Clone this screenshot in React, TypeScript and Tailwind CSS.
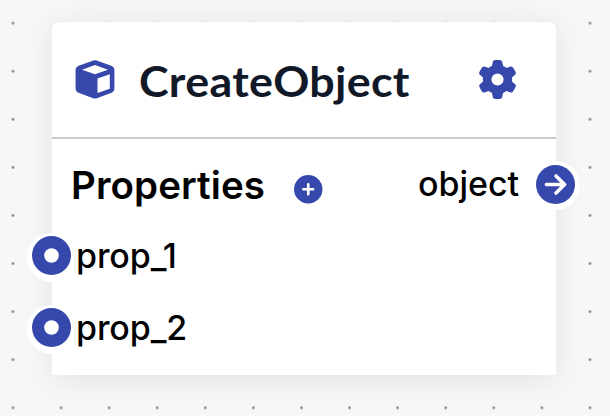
import { FaCircleDot, FaCirclePlus, FaGear } from "react-icons/fa6";
import type { ReactNode } from "react";

function DotGrid() {
  return (
    <svg className="absolute inset-0" width="610" height="416" aria-hidden="true">
      <defs>
        <pattern id="dots" x="-11.05" y="-0.85" width="48.08" height="48.08" patternUnits="userSpaceOnUse">
          <circle cx="24.04" cy="24.04" r="1.4" fill="#88898b" />
        </pattern>
      </defs>
      <rect width="610" height="416" fill="url(#dots)" />
    </svg>
  );
}

function CubeIcon() {
  return (
    <svg className="h-[39px] w-[40px] text-[#3748ac]" viewBox="0 0 40 39" fill="currentColor" aria-hidden="true">
      <path
        fillRule="evenodd"
        d="M18.4.6Q20 .1 21.6.6L36.3 5.7Q39.4 6.9 39.4 10V28.6Q39.4 31.6 36.5 32.8L21.8 38.2Q20 38.9 18.2 38.2L3.5 32.8Q.6 31.6.6 28.6V10Q.6 6.9 3.7 5.7ZM20 5 7 9.7 20 14.3 33 9.7ZM22.5 18.6V33L34.8 28.7V14.2Z"
      />
    </svg>
  );
}

function ArrowIcon() {
  return (
    <svg className="mt-[3.5px] size-[39px]" viewBox="0 0 39 39" fill="none" aria-hidden="true">
      <circle cx="19.5" cy="19.5" r="19.5" fill="currentColor" />
      <path d="M10.4 19.5H28.4M20 10.9 28.6 19.5 20 28.1" stroke="white" strokeWidth="3.6" strokeLinecap="round" strokeLinejoin="round" />
    </svg>
  );
}

function Handle({ children }: { children: ReactNode }) {
  return (
    <span className="flex size-[48.6px] shrink-0 items-start justify-center rounded-full bg-white text-[#3748ac]">
      {children}
    </span>
  );
}

function InputRow({ name }: { name: string }) {
  return (
    <div className="-ml-[24.6px] flex h-[72px] items-start">
      <Handle>
        <FaCircleDot className="mt-[2.5px] size-[39px]" />
      </Handle>
      <span className="pt-[3px] text-[34px] leading-[40px] font-[450] tracking-[-0.1px]">{name}</span>
    </div>
  );
}

export default function App() {
  return (
    <main className="relative h-[416px] w-[610px] overflow-hidden bg-[#f6f7f9] pt-[22px] pl-[52px] font-['Inter',sans-serif] text-black">
      <DotGrid />
      <section className="relative h-[353.3px] w-[503.5px] rounded-t-lg bg-white shadow-[0_4px_32px_rgba(0,0,0,0.09)]">
        <header className="flex h-[117px] items-center border-b-2 border-[#cbcbcc] pr-[38.5px] pl-[23px]">
          <CubeIcon />
          <h1 className="ml-[23.5px] origin-left scale-x-[1.066] pt-[2px] font-['Lato',sans-serif] text-[42px] leading-[50px] font-bold tracking-[0.3px] whitespace-nowrap text-[#111827]">
            CreateObject
          </h1>
          <FaGear className="ml-auto size-[39px] text-[#3748ac]" />
        </header>
        <div className="flex h-[94px] items-start pt-[22px] pl-[19px]">
          <h2 className="text-[38.5px] leading-[48px] font-semibold tracking-[0.1px]">Properties</h2>
          <FaCirclePlus className="mt-[14px] ml-[29px] size-[28.5px] text-[#3748ac]" />
          <div className="-mr-[24.3px] ml-auto flex items-start gap-[12px]">
            <span className="pt-[3px] text-[34px] leading-[40px] font-[450]">object</span>
            <Handle>
              <ArrowIcon />
            </Handle>
          </div>
        </div>
        <InputRow name="prop_1" />
        <InputRow name="prop_2" />
      </section>
    </main>
  );
}
